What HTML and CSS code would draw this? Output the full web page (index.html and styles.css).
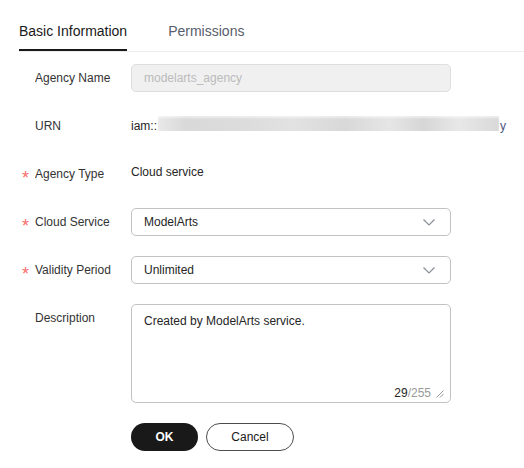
FILE: index.html
```html
<!DOCTYPE html>
<html>
<head>
<meta charset="utf-8">
<link rel="stylesheet" href="styles.css">
</head>
<body>
<div class="tabs">
  <div class="tab active">Basic Information</div>
  <div class="tab">Permissions</div>
</div>
<div class="form">
  <div class="row">
    <div class="label"><span class="star"></span>Agency Name</div>
    <div class="control"><div class="input disabled">modelarts_agency</div></div>
  </div>
  <div class="row">
    <div class="label"><span class="star"></span>URN</div>
    <div class="control urn"><span>iam::</span><span class="blur"></span><span class="tail">y</span></div>
  </div>
  <div class="row">
    <div class="label"><span class="star">*</span>Agency Type</div>
    <div class="control text">Cloud service</div>
  </div>
  <div class="row">
    <div class="label"><span class="star">*</span>Cloud Service</div>
    <div class="control"><div class="input select"><span>ModelArts</span>
      <svg class="chev" width="12" height="7" viewBox="0 0 12 7"><path d="M0.5 0.5 L6 6 L11.5 0.5" fill="none" stroke="#8a8e99" stroke-width="1.2"/></svg></div></div>
  </div>
  <div class="row">
    <div class="label"><span class="star">*</span>Validity Period</div>
    <div class="control"><div class="input select"><span>Unlimited</span>
      <svg class="chev" width="12" height="7" viewBox="0 0 12 7"><path d="M0.5 0.5 L6 6 L11.5 0.5" fill="none" stroke="#8a8e99" stroke-width="1.2"/></svg></div></div>
  </div>
  <div class="row">
    <div class="label"><span class="star"></span>Description</div>
    <div class="control">
      <div class="textarea">Created by ModelArts service.
        <div class="counter"><span class="cur">29</span>/255</div>
        <svg class="resize" width="8" height="8" viewBox="0 0 8 8"><path d="M7.5 0.5 L0.5 7.5 M7.5 4 L4 7.5" stroke="#999" stroke-width="1"/></svg>
      </div>
    </div>
  </div>
  <div class="buttons">
    <div class="btn ok">OK</div>
    <div class="btn cancel">Cancel</div>
  </div>
</div>
</body>
</html>
```
FILE: styles.css
```css
* { box-sizing: border-box; }
body {
  margin: 0;
  background: #fff;
  font-family: "Liberation Sans", Arial, sans-serif;
  font-size: 12px;
  color: #252b3a;
}
.tabs {
  display: flex;
  margin-left: 19px;
  border-bottom: 1px solid #ececec;
  gap: 41px;
}
.tab {
  font-size: 14px;
  line-height: 20px;
  padding-top: 21px;
  height: 51px;
  color: #575d6c;
}
.tab.active {
  color: #191919;
  box-shadow: inset 0 -2px 0 #191919;
}
.form {
  margin-left: 19px;
  padding-top: 12px;
}
.row {
  display: flex;
  align-items: flex-start;
  margin-bottom: 20px;
}
.label {
  width: 112px;
  flex: none;
  display: flex;
  align-items: flex-start;
  height: 28px;
  line-height: 28px;
  padding-left: 3px;
  color: #333;
}
.star {
  display: block;
  width: 13px;
  height: 28px;
  flex: none;
  color: #f66f6a;
  font-size: 18px;
  line-height: 20px;
  padding-top: 8px;
}
.control {
  min-height: 28px;
  display: flex;
  align-items: center;
  color: #252525;
}
.control.text { line-height: 24px; min-height: 24px; }
.input {
  width: 320px;
  height: 28px;
  border: 1px solid #c2c2c2;
  border-radius: 5px;
  padding: 0 12px;
  display: flex;
  align-items: center;
  justify-content: space-between;
}
.input.disabled {
  background: #f0f0f0;
  border-color: #dedede;
  color: #bbbbbb;
}
.chev { margin-right: 3px; margin-top: 1px; }
.urn .blur {
  width: 341px;
  height: 15px;
  margin: 0 1px 5px 1px;
  background: linear-gradient(90deg, #e9e9e9 0%, #d9d9d9 8%, #dcdcdc 25%, #e2e2e2 40%, #d8d8d8 55%, #e6e6e6 68%, #d6d6d6 78%, #e8e8e8 88%, #d9d9d9 100%);
  box-shadow: inset 0 2px 2px rgba(255,255,255,0.5);
}
.urn .tail { color: #4a5780; }
.textarea {
  position: relative;
  width: 320px;
  height: 99px;
  border: 1px solid #c2c2c2;
  border-radius: 5px;
  padding: 7px 12px;
  line-height: 18px;
  color: #252525;
}
.counter {
  position: absolute;
  right: 19px;
  bottom: 1px;
  line-height: 16px;
  color: #999;
}
.counter .cur { color: #252525; }
.resize {
  position: absolute;
  right: 6px;
  bottom: 4px;
}
.buttons {
  display: flex;
  gap: 8px;
  margin-left: 112px;
}
.btn {
  height: 28px;
  border-radius: 14px;
  display: flex;
  align-items: center;
  justify-content: center;
}
.btn.ok {
  width: 67px;
  background: #191919;
  color: #fff;
  font-weight: bold;
}
.btn.cancel {
  width: 88px;
  border: 1px solid #4d4d4d;
  color: #191919;
}
```
